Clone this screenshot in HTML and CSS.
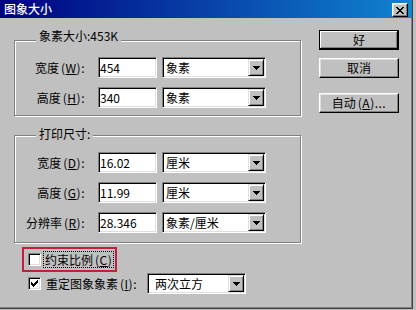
FILE: index.html
```html
<!DOCTYPE html>
<html lang="zh-CN">

<head>
    <meta charset="UTF-8" />
    <meta name="viewport" content="width=device-width, initial-scale=1.0" />
    <title>图象大小</title>
    <link rel="stylesheet" href="styles.css">
</head>

<body>
    <div class="window">
        <div class="titlebar">
            <span class="title">图象大小</span>
            <button class="close-btn">
                <svg width="8" height="7" viewBox="0 0 8 7" shape-rendering="crispEdges">
                    <path d="M0 0h2v1h-2z M6 0h2v1h-2z M1 1h2v1h-2z M5 1h2v1h-2z M2 2h4v1h-4z M3 3h2v1h-2z M2 4h4v1h-4z M1 5h2v1h-2z M5 5h2v1h-2z M0 6h2v1h-2z M6 6h2v1h-2z" fill="#000" />
                </svg>
            </button>
        </div>

        <div class="content">
            <div class="main">
                <div class="group group-pixel">
                    <span class="group-title">象素大小:453K</span>
                    <div class="row">
                        <span class="label">宽度<span class="acc">(<u>W</u>):</span></span>
                        <div class="field">454</div>
                        <div class="select"><span class="select-text">象素</span><span class="arrow-btn"><svg width="7" height="4" viewBox="0 0 7 4" shape-rendering="crispEdges"><path d="M0 0h7v1h-1v1h-1v1h-1v1h-1v-1h-1v-1h-1v-1h-1z" fill="#000" /></svg></span></div>
                    </div>
                    <div class="row">
                        <span class="label">高度<span class="acc">(<u>H</u>):</span></span>
                        <div class="field">340</div>
                        <div class="select"><span class="select-text">象素</span><span class="arrow-btn"><svg width="7" height="4" viewBox="0 0 7 4" shape-rendering="crispEdges"><path d="M0 0h7v1h-1v1h-1v1h-1v1h-1v-1h-1v-1h-1v-1h-1z" fill="#000" /></svg></span></div>
                    </div>
                </div>

                <div class="group group-print">
                    <span class="group-title">打印尺寸:</span>
                    <div class="row">
                        <span class="label">宽度<span class="acc">(<u>D</u>):</span></span>
                        <div class="field">16.02</div>
                        <div class="select"><span class="select-text">厘米</span><span class="arrow-btn"><svg width="7" height="4" viewBox="0 0 7 4" shape-rendering="crispEdges"><path d="M0 0h7v1h-1v1h-1v1h-1v1h-1v-1h-1v-1h-1v-1h-1z" fill="#000" /></svg></span></div>
                    </div>
                    <div class="row">
                        <span class="label">高度<span class="acc">(<u>G</u>):</span></span>
                        <div class="field">11.99</div>
                        <div class="select"><span class="select-text">厘米</span><span class="arrow-btn"><svg width="7" height="4" viewBox="0 0 7 4" shape-rendering="crispEdges"><path d="M0 0h7v1h-1v1h-1v1h-1v1h-1v-1h-1v-1h-1v-1h-1z" fill="#000" /></svg></span></div>
                    </div>
                    <div class="row">
                        <span class="label">分辨率<span class="acc">(<u>R</u>):</span></span>
                        <div class="field">28.346</div>
                        <div class="select"><span class="select-text">象素/厘米</span><span class="arrow-btn"><svg width="7" height="4" viewBox="0 0 7 4" shape-rendering="crispEdges"><path d="M0 0h7v1h-1v1h-1v1h-1v1h-1v-1h-1v-1h-1v-1h-1z" fill="#000" /></svg></span></div>
                    </div>
                </div>

                <div class="highlight">
                    <span class="checkbox"></span>
                    <span class="check-label focused">约束比例<span class="acc">(<u>C</u>)</span></span>
                </div>

                <div class="resample">
                    <span class="checkbox">
                        <svg width="7" height="7" viewBox="0 0 7 7" shape-rendering="crispEdges">
                            <path d="M6 0h1v1h-1z M5 1h2v1h-2z M0 2h1v1h-1z M4 2h3v1h-3z M0 3h2v1h-2z M3 3h3v1h-3z M0 4h5v1h-5z M1 5h3v1h-3z M2 6h1v1h-1z" fill="#000" />
                        </svg>
                    </span>
                    <span class="resample-label">重定图象象素<span class="acc">(<u>I</u>):</span></span>
                    <div class="select select-method"><span class="select-text">两次立方</span><span class="arrow-btn"><svg width="7" height="4" viewBox="0 0 7 4" shape-rendering="crispEdges"><path d="M0 0h7v1h-1v1h-1v1h-1v1h-1v-1h-1v-1h-1v-1h-1z" fill="#000" /></svg></span></div>
                </div>
            </div>

            <div class="side">
                <button class="btn btn-default">好</button>
                <button class="btn btn-cancel">取消</button>
                <button class="btn btn-auto">自动<span class="acc">(<u>A</u>)...</span></button>
            </div>
        </div>
    </div>
</body>

</html>
```

FILE: styles.css
```css
* {
    box-sizing: border-box;
}

body {
    margin: 0;
    background: #c0c0c0;
    font-family: "SimSun", "Noto Sans CJK SC", sans-serif;
    font-size: 12px;
    line-height: 12px;
    color: #000;
}

.window {
    width: 413px;
    height: 309px;
    background: #c0c0c0;
    border-right: 1px solid #404040;
    border-bottom: 1px solid #404040;
    box-shadow: inset -1px -1px 0 #808080;
}

.titlebar {
    height: 18px;
    display: flex;
    justify-content: space-between;
    align-items: flex-start;
    padding: 0 4px;
    background: linear-gradient(to right, #000080, #1084d0);
}

.title {
    color: #fff;
    line-height: 18px;
    font-weight: 500;
}

.close-btn {
    width: 16px;
    height: 14px;
    margin-top: 3px;
    padding: 0;
    display: flex;
    align-items: center;
    justify-content: center;
    background: #c0c0c0;
    border: 1px solid;
    border-color: #fff #000 #000 #fff;
    box-shadow: inset -1px -1px 0 #808080, inset 1px 1px 0 #dfdfdf;
}

.content {
    display: flex;
    gap: 17px;
    padding-left: 14px;
}

.main {
    width: 288px;
}

/* etched group box */
.group {
    position: relative;
    width: 287px;
    border: 1px solid #808080;
    box-shadow: inset 1px 1px 0 #fff, 1px 1px 0 #fff;
}

.group-pixel {
    margin-top: 22px;
    padding: 16px 0 7px;
}

.group-print {
    margin-top: 19px;
    padding: 16px 0 9px;
}

.group-title {
    position: absolute;
    left: 21px;
    top: -11px;
    padding: 0 3px;
    background: #c0c0c0;
}

.group-print .group-title {
    top: -8px;
}

/* ascii part of a label: a bit wider, as in the bitmap font */
.acc {
    padding-left: 2px;
    letter-spacing: 0.5px;
}

.row {
    display: flex;
    align-items: center;
    height: 21px;
}

.row + .row {
    margin-top: 9px;
}

.label {
    width: 70px;
    margin-right: 13px;
    text-align: right;
    white-space: nowrap;
}

.field {
    width: 59px;
    height: 21px;
    display: flex;
    align-items: center;
    padding: 0 1px;
    background: #fff;
    border: 1px solid;
    border-color: #808080 #fff #fff #808080;
    box-shadow: inset 1px 1px 0 #000, inset -1px -1px 0 #dfdfdf;
}

.select {
    width: 104px;
    height: 21px;
    margin-left: 5px;
    display: flex;
    align-items: center;
    padding: 1px;
    background: #fff;
    border: 1px solid;
    border-color: #808080 #fff #fff #808080;
    box-shadow: inset 1px 1px 0 #000, inset -1px -1px 0 #dfdfdf;
}

.select-text {
    flex: 1;
    padding-left: 2px;
    white-space: nowrap;
}

.arrow-btn {
    width: 16px;
    height: 17px;
    display: flex;
    align-items: center;
    justify-content: center;
    background: #c0c0c0;
    border: 1px solid;
    border-color: #dfdfdf #000 #000 #dfdfdf;
    box-shadow: inset 1px 1px 0 #fff, inset -1px -1px 0 #808080;
}

.highlight {
    width: 95px;
    height: 25px;
    margin: 4px 0 0 8px;
    display: flex;
    align-items: center;
    padding-left: 4px;
    border: 2px solid #c0203c;
}

.checkbox {
    width: 13px;
    height: 13px;
    flex: none;
    display: flex;
    align-items: center;
    justify-content: center;
    background: #fff;
    border: 1px solid;
    border-color: #808080 #fff #fff #808080;
    box-shadow: inset 1px 1px 0 #000, inset -1px -1px 0 #dfdfdf;
}

.check-label {
    margin-left: 2px;
    padding: 2px 1px 1px;
    white-space: nowrap;
}

.focused {
    border: 1px dotted #000;
}

.resample {
    display: flex;
    align-items: center;
    height: 21px;
    margin-top: 1px;
    padding-left: 14px;
}

.resample-label {
    width: 96px;
    margin-left: 5px;
    white-space: nowrap;
}

.select-method {
    width: 99px;
}

.select-method .select-text {
    padding-left: 6px;
}

.side {
    display: flex;
    flex-direction: column;
    padding-top: 12px;
}

.btn {
    width: 80px;
    height: 20px;
    padding: 0;
    font: inherit;
    color: #000;
    background: #c0c0c0;
    border: 1px solid;
    border-color: #fff #000 #000 #fff;
    box-shadow: inset -1px -1px 0 #808080, inset 1px 1px 0 #dfdfdf;
}

.btn-default {
    border-color: #000;
    box-shadow: inset -1px -1px 0 #000, inset 1px 1px 0 #fff, inset -2px -2px 0 #808080;
}

.btn-cancel {
    margin-top: 8px;
}

.btn-auto {
    margin-top: 15px;
}
```
